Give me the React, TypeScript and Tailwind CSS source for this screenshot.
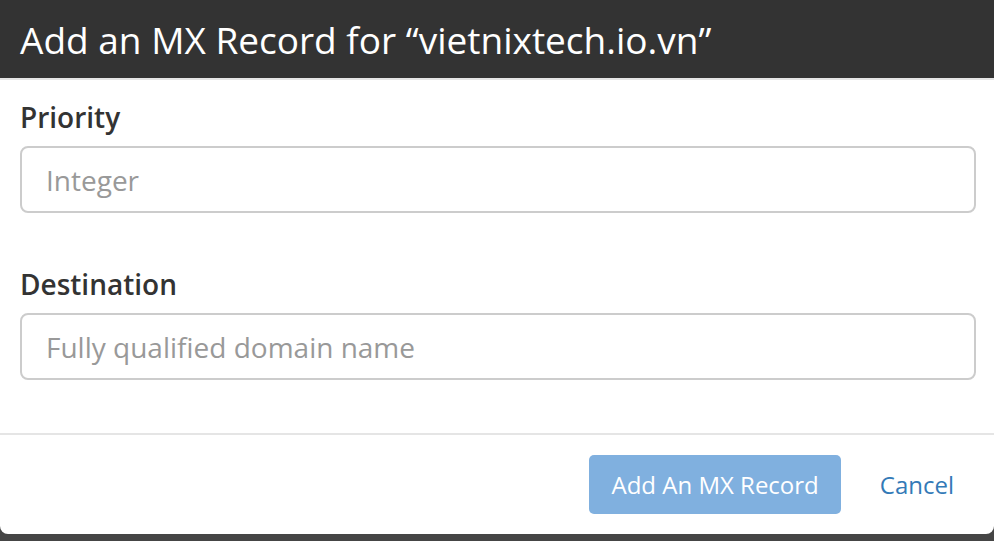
export default function App() {
  return (
    <div className="min-h-screen bg-[#454545] font-['Open_Sans',sans-serif]">
      <div className="overflow-hidden rounded-b-[8px] bg-white">
        <div className="flex h-[80px] items-center border-b-2 border-[#e5e5e5] bg-[#333333] pr-5 pl-[20px]">
          <h4 className="text-[37px] leading-none text-white">Add an MX Record for “vietnixtech.io.vn”</h4>
        </div>
        <div className="pt-[19px] pr-[18px] pb-[53px] pl-5">
          <label className="mb-[11px] block text-[28px] leading-[36px] font-semibold text-[#333333]">Priority</label>
          <input
            type="text"
            placeholder="Integer"
            className="block h-[67px] w-full rounded-[8px] border-2 border-[#cccccc] px-6 text-[28px] text-[#555555] outline-none placeholder:text-[#999999]"
          />
          <label className="mt-[53px] mb-[11px] block text-[28px] leading-[36px] font-semibold text-[#333333]">Destination</label>
          <input
            type="text"
            placeholder="Fully qualified domain name"
            className="block h-[67px] w-full rounded-[8px] border-2 border-[#cccccc] px-6 text-[28px] text-[#555555] outline-none placeholder:text-[#999999]"
          />
        </div>
        <div className="flex items-center justify-end gap-[19px] border-t-2 border-[#e5e5e5] px-5 py-[20px]">
          <button className="h-[59px] rounded-[5px] bg-[#80b0df] px-[22px] text-[24px] text-white">Add An MX Record</button>
          <button className="px-5 text-[24px] text-[#337ab7]">Cancel</button>
        </div>
      </div>
    </div>
  );
}
